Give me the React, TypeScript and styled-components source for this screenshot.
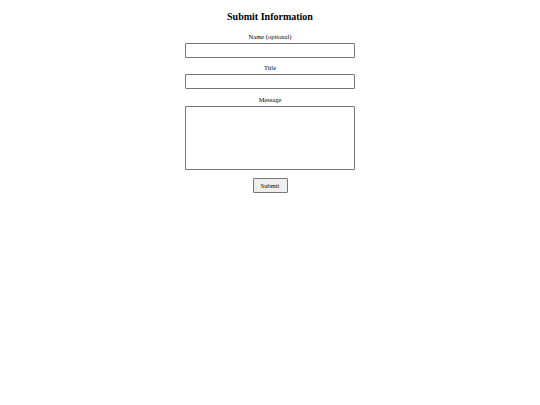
import styled, { createGlobalStyle } from 'styled-components';

const GlobalStyle = createGlobalStyle`
  html, body {
    margin: 0;
    padding: 0;
    background: #ffffff;
  }
  body {
    font-family: "Liberation Serif", "Times New Roman", serif;
    color: #000000;
  }
`;

const Page = styled.div`
  display: flex;
  flex-direction: column;
  align-items: center;
  width: 540px;
  padding-top: 10px;
`;

const Heading = styled.h1`
  margin: 0 0 8px;
  font-size: 10px;
  line-height: 14px;
  font-weight: bold;
`;

const Form = styled.form`
  display: flex;
  flex-direction: column;
  align-items: center;
  width: 170px;
`;

const Field = styled.div<{ $spacing?: number }>`
  display: flex;
  flex-direction: column;
  align-items: center;
  width: 100%;
  margin-bottom: ${(p) => p.$spacing ?? 5}px;
`;

const Label = styled.label`
  font-size: 6.5px;
  line-height: 8px;
  margin-top: 1px;
  margin-bottom: 2px;
`;

const Input = styled.input`
  box-sizing: border-box;
  width: 100%;
  height: 15px;
  border: 1px solid #767676;
  border-radius: 1px;
  padding: 0 2px;
  font: inherit;
  font-size: 6.5px;
`;

const TextArea = styled.textarea`
  box-sizing: border-box;
  display: block;
  width: 100%;
  height: 64px;
  border: 1px solid #767676;
  border-radius: 1px;
  padding: 2px;
  resize: none;
  font: inherit;
  font-size: 6.5px;
`;

const SubmitButton = styled.button`
  box-sizing: border-box;
  width: 35px;
  height: 15px;
  margin-top: 3px;
  border: 1px solid #767676;
  border-radius: 1px;
  background: #efefef;
  font-family: "Liberation Serif", "Times New Roman", serif;
  font-size: 6.5px;
  padding: 0;
`;

export default function App() {
  return (
    <>
      <GlobalStyle />
      <Page>
        <Heading>Submit Information</Heading>
        <Form onSubmit={(e) => e.preventDefault()}>
          <Field>
            <Label htmlFor="name">Name (optional)</Label>
            <Input id="name" type="text" />
          </Field>
          <Field $spacing={6}>
            <Label htmlFor="title">Title</Label>
            <Input id="title" type="text" />
          </Field>
          <Field>
            <Label htmlFor="message">Message</Label>
            <TextArea id="message" />
          </Field>
          <SubmitButton type="submit">Submit</SubmitButton>
        </Form>
      </Page>
    </>
  );
}
